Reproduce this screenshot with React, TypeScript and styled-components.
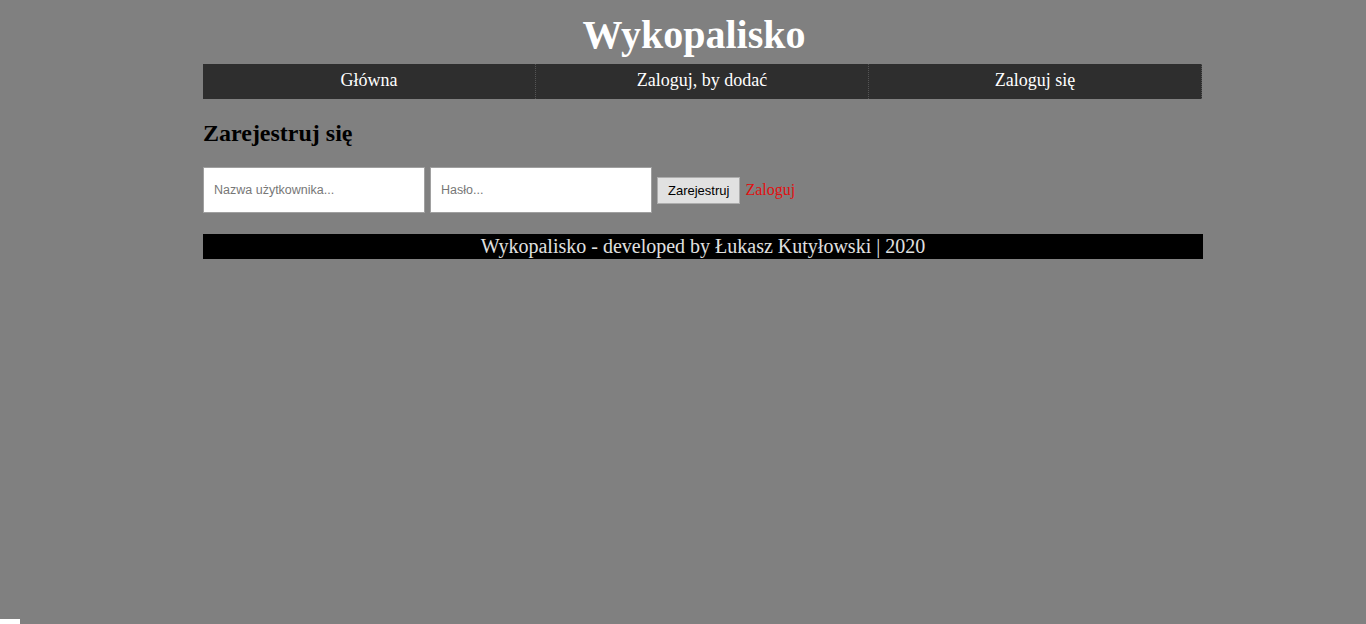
import styled, { createGlobalStyle } from "styled-components";

const GlobalStyle = createGlobalStyle`
  html, body {
    margin: 0;
    padding: 0;
    background: #808080;
    font-family: "Liberation Serif", "Times New Roman", serif;
  }
`;

const Shell = styled.div`
  padding-left: 40px;
`;

const Page = styled.div`
  width: 1000px;
  margin: 0 auto;
  padding-top: 12px;
`;

const Title = styled.h1`
  margin: 0;
  padding-right: 18px;
  text-align: center;
  color: white;
  font-size: 40px;
  font-weight: bold;
  line-height: 46px;
  height: 52px;
`;

const Nav = styled.nav`
  display: flex;
  height: 35px;
  width: 999px;
  background: #2e2e2e;
`;

const NavItem = styled.a`
  flex: 1;
  display: flex;
  align-items: center;
  justify-content: center;
  color: white;
  font-size: 18px;
  text-decoration: none;
  border-right: 1px dotted #555;
  padding-bottom: 2px;
`;

const Heading = styled.h2`
  margin: 21px 0 20px;
  font-size: 24px;
  line-height: 27px;
  color: #000;
`;

const Form = styled.form`
  display: flex;
  align-items: center;
  gap: 5px;
`;

const Input = styled.input`
  box-sizing: border-box;
  width: 222px;
  height: 46px;
  padding: 0 10px;
  border: 1px solid #a0a0a0;
  background: white;
  font-family: "Liberation Sans", Arial, sans-serif;
  font-size: 12.5px;
  outline: none;

  &::placeholder {
    color: #777;
  }
`;

const Button = styled.button`
  box-sizing: border-box;
  height: 27px;
  padding: 0 10px;
  background: #e1e1e1;
  border: 1px solid #adadad;
  font-family: "Liberation Sans", Arial, sans-serif;
  font-size: 13px;
  color: #000;
`;

const LoginLink = styled.a`
  color: #e01010;
  font-size: 16px;
  text-decoration: none;
`;

const Footer = styled.footer`
  margin-top: 21px;
  height: 25px;
  background: #000;
  color: #e0e0e0;
  font-size: 20px;
  line-height: 24px;
  text-align: center;
`;

const Corner = styled.div`
  position: fixed;
  left: 0;
  bottom: 0;
  width: 20px;
  height: 5px;
  background: white;
`;

function App() {
  return (
    <Shell>
      <GlobalStyle />
      <Page>
        <Title>Wykopalisko</Title>
        <Nav>
          <NavItem href="#">Główna</NavItem>
          <NavItem href="#">Zaloguj, by dodać</NavItem>
          <NavItem href="#">Zaloguj się</NavItem>
        </Nav>
        <Heading>Zarejestruj się</Heading>
        <Form onSubmit={(e) => e.preventDefault()}>
          <Input type="text" placeholder="Nazwa użytkownika..." />
          <Input type="password" placeholder="Hasło..." />
          <Button type="submit">Zarejestruj</Button>
          <LoginLink href="#">Zaloguj</LoginLink>
        </Form>
        <Footer>Wykopalisko - developed by Łukasz Kutyłowski | 2020</Footer>
      </Page>
      <Corner />
    </Shell>
  );
}

export default App;
